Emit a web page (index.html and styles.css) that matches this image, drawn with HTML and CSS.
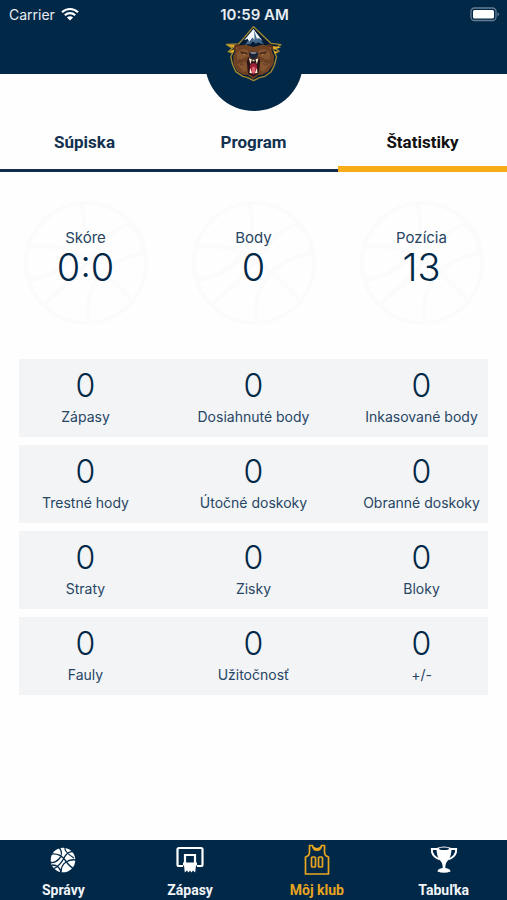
FILE: index.html
```
<!DOCTYPE html>
<html lang="sk">
<head>
    <meta charset="UTF-8">
    <meta name="viewport" content="width=device-width, initial-scale=1.0">
    <title>Môj klub</title>
    <link rel="stylesheet" href="styles.css">
</head>
<body>
    <header class="header">
        <div class="status-bar">
            <div class="carrier">
                <span>Carrier</span>
                <svg class="wifi" viewBox="0 0 18 14" aria-hidden="true">
                    <path d="M1 5.2C5.5.9 12.5.9 17 5.2M3.8 8.2c3-2.800 7.400-2.800 10.400 0" fill="none" stroke="#fff" stroke-width="2.200"/>
                    <path d="M5.900 10.400c1.800-1.700 4.400-1.700 6.200 0L9 13.600z" fill="#fff"/>
                </svg>
            </div>
            <span class="time">10:59 AM</span>
            <svg class="battery" viewBox="0 0 30 15" aria-hidden="true">
                <rect x="1" y="1" width="25" height="12.500" rx="3.500" fill="none" stroke="#667c92" stroke-width="1.300"/>
                <rect x="3" y="3" width="21" height="8.500" rx="1.500" fill="#fff"/>
                <path d="M27.500 5v4.500q3-2.200 0-4.500" fill="#667c92"/>
            </svg>
        </div>
        <div class="club-badge">
            <svg class="club-logo" viewBox="76 77 170 168" role="img" aria-label="Logo klubu">
                <path d="M161 79l-35 41-10 11-36 1 18 12-13 10 13 4-5 12 5 22 10 22 21 14 15 4 17 9 17-9 17-4 19-14 10-20 6-24-5-13 13-4-12-8 17-12-30-4-16-15z" fill="#021c37" stroke="#a48b31" stroke-width="4" stroke-linejoin="round"/>
                <path d="M161 86l-28 34 11-5 3 14 8-14 8 11 5-12 8 11 3-10 10 8z" fill="#f4f8fa"/>
                <path d="M163 90l8 25 7-2 15 20-18-7-7 4-8-8-9 10-8-1-9 5 12-18 5 8 7-15 6 8z" fill="#466a8c"/>
                <path d="M80 133l31 2-7 9zM88 153l17-7-4 12zM244 141l-32-5 9 12zM235 157l-15-8 4 11z" fill="#e2ad26"/>
                <circle cx="114" cy="144" r="12" fill="#5b321e"/>
                <circle cx="208" cy="144" r="12" fill="#5b321e"/>
                <circle cx="114" cy="145" r="6" fill="#8f5c38"/>
                <circle cx="208" cy="145" r="6" fill="#8f5c38"/>
                <path d="M112 142q15-13 36-6l13 4 14-4q22-7 35 6l13 25-2 24-15 22-18 10-12 1-16 12-16-12-14-1-19-12-10-20-1-24z" fill="#704224"/>
                <path d="M111 158q14-17 33-8l3 16-17 8-17 12zM211 158q-14-17-33-8l-3 16 17 8 17 12zM112 192l21-9 10 5-2 23-11 3zM211 192l-22-9-9 5 2 23 11 3z" fill="#855531"/>
                <path d="M120 152l24 6-3 6-16-4zM202 152l-24 6 3 6 16-4z" fill="#4a2b1c"/>
                <path d="M130 160l10 3-7 1zM192 160l-10 3 7 1z" fill="#d9a545"/>
                <path d="M109 181l14-4-9 9 16-3-10 11 15-4M214 181l-14-4 9 9-16-3 10 11-15-4" fill="none" stroke="#5a3520" stroke-width="2"/>
                <path d="M147 161l6-7h17l6 7-5 10-10 5-10-5z" fill="#182436"/>
                <path d="M151 156h20l-5 4h-11z" fill="#aaa3b0"/>
                <path d="M145 171l16 5 17-5 3 14-5 35-15 9-16-9-4-35z" fill="#28131a"/>
                <path d="M151 193q10-10 20 0l2 18-12 13-12-13z" fill="#9c1e37"/>
                <path d="M156 203q5-8 11 0l-2 13-4 4-5-5z" fill="#dc6272"/>
                <path d="M147 174l9 3-4 15zM176 174l-9 3 4 15zM149 218l2-15 6 16zM173 218l-2-15-6 16zM158 178h6v5h-6z" fill="#fff0cf"/>
            </svg>
        </div>
    </header>

    <nav class="tabs">
        <button class="tab">Súpiska</button>
        <button class="tab">Program</button>
        <button class="tab active">Štatistiky</button>
    </nav>

    <main class="content">
        <section class="summary">
            <div class="summary-item">
                <svg class="ball" viewBox="0 0 126 126" aria-hidden="true"><circle cx="63" cy="63" r="60"/><path d="M57 3q10 28-5 50T7 80M5 47q38-5 65 17t38 36M20 105q35-28 53-54t36-26M66 123q-4-30 12-48t43-22"/></svg>
                <span class="summary-label">Skóre</span>
                <span class="summary-value">0:0</span>
            </div>
            <div class="summary-item">
                <svg class="ball" viewBox="0 0 126 126" aria-hidden="true"><circle cx="63" cy="63" r="60"/><path d="M57 3q10 28-5 50T7 80M5 47q38-5 65 17t38 36M20 105q35-28 53-54t36-26M66 123q-4-30 12-48t43-22"/></svg>
                <span class="summary-label">Body</span>
                <span class="summary-value">0</span>
            </div>
            <div class="summary-item">
                <svg class="ball" viewBox="0 0 126 126" aria-hidden="true"><circle cx="63" cy="63" r="60"/><path d="M57 3q10 28-5 50T7 80M5 47q38-5 65 17t38 36M20 105q35-28 53-54t36-26M66 123q-4-30 12-48t43-22"/></svg>
                <span class="summary-label">Pozícia</span>
                <span class="summary-value">13</span>
            </div>
        </section>

        <section class="stats">
            <div class="stats-row">
                <div class="stat"><span class="stat-value">0</span><span class="stat-label">Zápasy</span></div>
                <div class="stat"><span class="stat-value">0</span><span class="stat-label">Dosiahnuté body</span></div>
                <div class="stat"><span class="stat-value">0</span><span class="stat-label">Inkasované body</span></div>
            </div>
            <div class="stats-row">
                <div class="stat"><span class="stat-value">0</span><span class="stat-label">Trestné hody</span></div>
                <div class="stat"><span class="stat-value">0</span><span class="stat-label">Útočné doskoky</span></div>
                <div class="stat"><span class="stat-value">0</span><span class="stat-label">Obranné doskoky</span></div>
            </div>
            <div class="stats-row">
                <div class="stat"><span class="stat-value">0</span><span class="stat-label">Straty</span></div>
                <div class="stat"><span class="stat-value">0</span><span class="stat-label">Zisky</span></div>
                <div class="stat"><span class="stat-value">0</span><span class="stat-label">Bloky</span></div>
            </div>
            <div class="stats-row">
                <div class="stat"><span class="stat-value">0</span><span class="stat-label">Fauly</span></div>
                <div class="stat"><span class="stat-value">0</span><span class="stat-label">Užitočnosť</span></div>
                <div class="stat"><span class="stat-value">0</span><span class="stat-label">+/-</span></div>
            </div>
        </section>
    </main>

    <nav class="bottom-nav">
        <a class="nav-item" href="#spravy">
            <svg class="nav-icon" viewBox="0 0 32 32" aria-hidden="true">
                <circle cx="16" cy="16" r="12.300" fill="#fff"/>
                <path d="M12 3q5 7 0 12T3 18M4 10q9-1 14 6t9 9M6 25Q13 22 17 14t10-6M14 29q0-8 5-11t10-2M18 3q-1 5 9 11M5 21q8 0 9 8" fill="none" stroke="#022848" stroke-width="1.300"/>
            </svg>
            <span>Správy</span>
        </a>
        <a class="nav-item" href="#zapasy">
            <svg class="nav-icon" viewBox="0 0 32 32" aria-hidden="true">
                <path d="M9 22H5q-1.500 0-1.500-1.500v-15Q3.500 4 5 4h22q1.500 0 1.500 1.500v15Q28.500 22 27 22h-4" fill="none" stroke="#fff" stroke-width="2.200"/>
                <path d="M11 20v-9h10v9" fill="none" stroke="#fff" stroke-width="2.200"/>
                <path d="M9 18.500h14v3h-1l-.8 7-2.200-2-1.500 2-1.500-2-1.500 2-1.500-2-2.200 2-.8-7H9z" fill="#fff"/>
            </svg>
            <span>Zápasy</span>
        </a>
        <a class="nav-item active" href="#klub">
            <svg class="nav-icon" viewBox="0 0 32 32" aria-hidden="true">
                <path d="M8.500 1.500h3q.5 4 4.500 4t4.500-4h3V8q0 4 4 5v17h-23V13q4-1 4-5z" fill="none" stroke="#e9a51f" stroke-width="1.700" stroke-linejoin="round"/>
                <path d="M11.500 1.500L13 3l3 1 3-1 1.500-1.500Q21 7 16 7t-4.500-5.500z" fill="#e9a51f"/>
                <rect x="10.500" y="13" width="4" height="10" rx="1" fill="none" stroke="#e9a51f" stroke-width="1.700"/>
                <rect x="17.500" y="13" width="4" height="10" rx="1" fill="none" stroke="#e9a51f" stroke-width="1.700"/>
            </svg>
            <span>Môj klub</span>
        </a>
        <a class="nav-item" href="#tabulka">
            <svg class="nav-icon" viewBox="0 0 32 32" aria-hidden="true">
                <path d="M9 5H3.800q-.5 7 7.700 10.500M23 5h5.200q.5 7-7.700 10.500" fill="none" stroke="#fff" stroke-width="1.900"/>
                <path d="M8.500 4q7.500-3 15 0 0 9-4 13-2.200 2-2.200 7 5.200.5 5.200 3.500-6.500 2.500-13 0 0-3 5.200-3.500 0-5-2.200-7-4-4-4-13z" fill="#fff"/>
                <ellipse cx="16" cy="4.800" rx="5" ry="1.200" fill="#022848"/>
            </svg>
            <span>Tabuľka</span>
        </a>
    </nav>
</body>
</html>
```

FILE: styles.css
```
* {
    box-sizing: border-box;
}

body {
    display: flex;
    flex-direction: column;
    min-height: 100vh;
    margin: 0;
    background-color: #fefefe;
    color: #022848;
    font-family: Inter, sans-serif;
}

.header {
    position: relative;
    height: 74px;
    background-color: #022848;
}

.status-bar {
    position: relative;
    z-index: 1;
    display: grid;
    grid-template-columns: 1fr auto 1fr;
    align-items: center;
    height: 28px;
    padding: 0 7px 0 9px;
    color: #e8edf2;
    font-size: 14px;
}

.carrier {
    display: flex;
    align-items: center;
    gap: 6px;
}

.wifi {
    width: 18px;
    height: 14px;
}

.time {
    font-size: 15px;
    font-weight: 600;
}

.battery {
    width: 30px;
    height: 15px;
    justify-self: end;
}

/* round badge that hangs below the header */
.club-badge {
    position: absolute;
    top: 13px;
    left: 50%;
    width: 98px;
    height: 98px;
    margin-left: -49px;
    padding-top: 13px;
    border-radius: 50%;
    background-color: #022848;
    text-align: center;
}

.club-logo {
    width: 57px;
    height: 56px;
}

.tabs {
    display: grid;
    grid-template-columns: repeat(3, 1fr);
    height: 60px;
    margin-top: 38px;
}

.tab {
    border: none;
    border-bottom: 3px solid #122c50;
    padding: 3px 0 0;
    background: none;
    color: #12304f;
    font-family: Roboto, sans-serif;
    font-size: 17px;
    font-weight: bold;
    cursor: pointer;
}

.tab.active {
    border-bottom: 6px solid #f8ac18;
    padding-top: 6px;
    color: #111;
}

.content {
    flex: 1;
    padding: 28px 19px;
}

.summary,
.stats-row {
    display: grid;
    grid-template-columns: repeat(3, 1fr);
    column-gap: 35px;
}

.summary-item,
.stat {
    display: flex;
    flex-direction: column;
    align-items: center;
    white-space: nowrap;
}

.summary-item {
    position: relative;
    height: 126px;
    padding-top: 28px;
}

.ball {
    position: absolute;
    top: 0;
    width: 126px;
    height: 126px;
    fill: none;
    stroke: #fbfbfb;
    stroke-width: 4;
}

.summary-label,
.summary-value {
    position: relative;
}

.summary-label {
    color: #284563;
    font-size: 15px;
    line-height: 20px;
}

.summary-value {
    font-size: 38px;
    font-weight: 300;
    line-height: 38px;
}

.stats {
    display: grid;
    gap: 8px;
    margin-top: 33px;
}

.stats-row {
    padding: 10px 0;
    background-color: #f2f4f6;
}

.stat-value {
    font-size: 32px;
    font-weight: 300;
    line-height: 34px;
}

.stat-label {
    margin-top: 4px;
    color: #284563;
    font-size: 14px;
    line-height: 20px;
}

.bottom-nav {
    display: grid;
    grid-template-columns: repeat(4, 1fr);
    height: 60px;
    background-color: #022848;
}

.nav-item {
    display: flex;
    flex-direction: column;
    align-items: center;
    gap: 6px;
    padding-top: 4px;
    color: #f2f5f8;
    font-family: Roboto, sans-serif;
    font-size: 14px;
    font-weight: bold;
    line-height: 16px;
    text-decoration: none;
}

.nav-item.active {
    color: #e9a51f;
}

.nav-icon {
    width: 32px;
    height: 32px;
}
```
